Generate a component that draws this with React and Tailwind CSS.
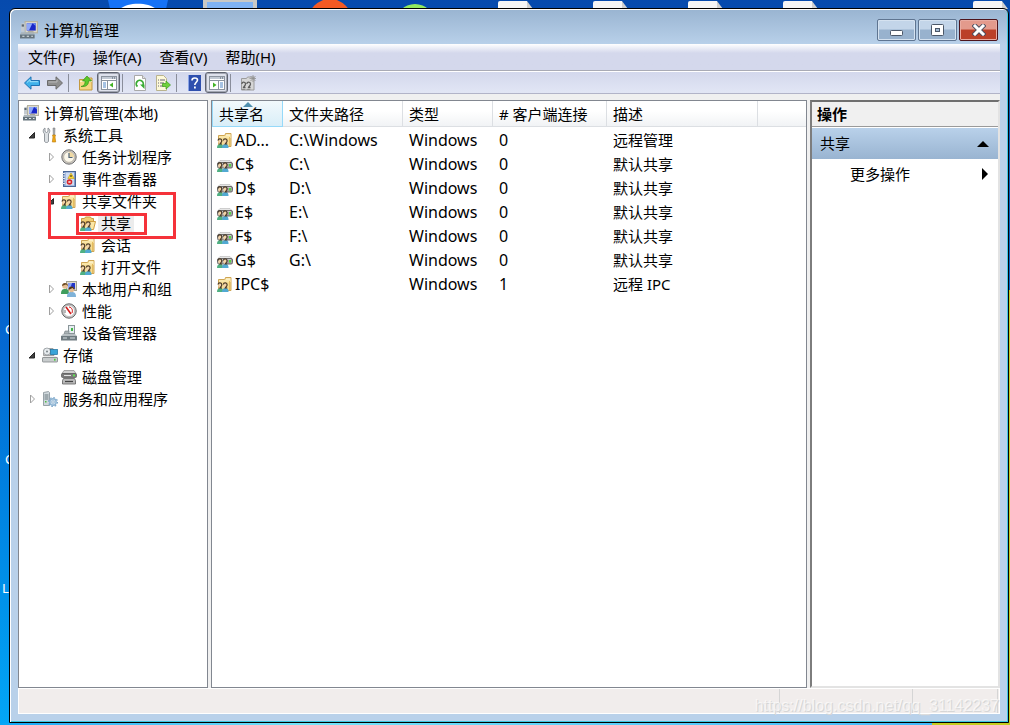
import { useState } from "react";

// Small Windows style icons, all drawn on a 16px grid
const Svg = ({ children, size = "size-4" }) => (
  <svg viewBox="0 0 16 16" className={`${size} shrink-0`} aria-hidden="true">
    {children}
  </svg>
);

const ComputerIcon = ({ size }) => (
  <Svg size={size}>
    <rect x="4.5" y="0.5" width="11" height="10" fill="#dedbcd" stroke="#b5b2a2" />
    <rect x="6" y="2" width="8" height="6.500" fill="#1a28c8" />
    <path d="M6 2h5l-3 6.500H6z" fill="#8fa8f8" />
    <path d="M11 2h3v2.500z" fill="#6f8df0" />
    <path d="M1 2.500l3-1v8H1z" fill="#c3cad0" />
    <path d="M1.500 3h2v2h-2z" fill="#5b6670" />
    <path d="M7 9h5v2H7z" fill="#a9a698" />
    <path d="M1 10h11l1 2H0z" fill="#aab4ba" />
    <rect x="0" y="12" width="13" height="3.5" fill="#66747d" />
    <path d="M2 13.5h2M6 13.5h2M10 13.5h1.5" stroke="#dfe6ea" />
  </Svg>
);

// two heads with green and blue shoulders, in the lower left corner
const People = () => (
  <>
    <path d="M0 16c0-3 1.400-4 3.500-4s2.500 1 2.500 4z" fill="#4fb083" />
    <path d="M5 16c0-3 1.400-4 3.500-4s3 1 3 4z" fill="#52a9d2" />
    <ellipse cx="3" cy="9.500" rx="1.800" ry="2.500" fill="#f1d3a9" />
    <ellipse cx="8" cy="9.500" rx="1.800" ry="2.500" fill="#f1d3a9" />
    <path d="M1 8.500c.3-2.200 3.800-2 3.800.2 0 1.600-1 2-1.800 3.300h2" fill="none" stroke="#4b3a28" strokeWidth="1.200" />
    <path d="M6.300 8.500c.3-2.200 3.800-2 3.800.2 0 1.600-1 2-1.800 3.300h2" fill="none" stroke="#4b3a28" strokeWidth="1.200" />
  </>
);

const SharedFolderIcon = () => (
  <Svg>
    <path d="M1.500 3.500h6l1-1.500V1.500h5.500v13h-12.500z" fill="#f5dc92" stroke="#cfa554" />
    <path d="M9 2.500h4.500v1.200H9z" fill="#fff8dc" />
    <path d="M2 5h12" stroke="#fff0bd" />
    <path d="M12.500 5v9" stroke="#e5bc5f" />
    <People />
  </Svg>
);

const OpenSharedFolderIcon = () => (
  <Svg>
    <path d="M1.500 3.500h3l1-1.500h5l1 1.500h2v9h-12z" fill="#f0cd74" stroke="#c99b45" />
    <path d="M6 6.500h9.500l-2 8H4z" fill="#fbe7a6" stroke="#cf9f42" />
    <People />
  </Svg>
);

const SharedDriveIcon = () => (
  <Svg>
    <path d="M3 4.500h10l2 2H1z" fill="#e6e6e6" stroke="#b5b5b5" strokeWidth="0.600" />
    <rect x="0.500" y="6.500" width="15" height="5.500" rx="1.500" fill="#a2a2a2" stroke="#6c6c6c" />
    <rect x="12" y="8" width="2" height="2.500" fill="#53d843" />
    <path d="M2 7.500h12" stroke="#d6d6d6" strokeWidth="0.700" />
    <People />
  </Svg>
);

const ToolsIcon = () => (
  <Svg>
    <path d="M3 1v3.500l1.500 1L6 4.500V1c2 1 2.500 4 .5 5.800V14c0 2-4 2-4 0V6.800C.5 5 1 2 3 1z" fill="#dde1e4" stroke="#7b8288" strokeWidth="0.800" />
    <path d="M11 1h2l-.3 7h-1.400z" fill="#a9adb2" stroke="#777" strokeWidth="0.500" />
    <path d="M10.500 8h3l-.5 2 .7 5h-3.400l.7-5z" fill="#f0a818" stroke="#b87908" strokeWidth="0.600" />
  </Svg>
);

const ClockIcon = () => (
  <Svg>
    <circle cx="8" cy="8" r="7.200" fill="#c9c5bf" stroke="#6e6e6e" />
    <circle cx="8" cy="8" r="5.300" fill="#fbf7ea" stroke="#a9a294" strokeWidth="0.600" />
    <path d="M8 3a5 5 0 0 1 5 5H8z" fill="#efd9a4" />
    <path d="M8 4v4.500h3.500" fill="none" stroke="#4d6378" strokeWidth="1.200" />
  </Svg>
);

const EventIcon = () => (
  <Svg>
    <rect x="2.500" y="0.500" width="12" height="15" fill="#7e9bcb" stroke="#4a6798" />
    <rect x="4.500" y="1.500" width="8.500" height="13" fill="#cfdcf1" />
    <path d="M1 2.500h3M1 5h3M1 7.500h3M1 10h3M1 12.500h3" stroke="#e6e9ee" />
    <path d="M10 2l3.300 5.500H6.800z" fill="#ffd933" stroke="#b99100" strokeWidth="0.500" />
    <path d="M10 4v2" stroke="#222" />
    <circle cx="8.500" cy="11" r="2.800" fill="#d8242a" />
    <path d="M7.500 10l2 2m0-2l-2 2" stroke="#fff" strokeWidth="0.900" />
  </Svg>
);

const UsersIcon = () => (
  <Svg>
    <rect x="5.500" y="0.500" width="10" height="9" fill="#dedbcf" stroke="#a3a193" />
    <rect x="7" y="2" width="7" height="6" fill="#2336c9" />
    <path d="M7 2h4L9 8H7z" fill="#8ea4f3" />
    <path d="M0 13c0-4 1.500-5 4-5s4 1 4 5z" fill="#3f9d5d" />
    <circle cx="4" cy="5" r="2.800" fill="#e5bd92" />
    <path d="M1 5c0-4 6-4 6 0L5 3.600z" fill="#6b4a22" />
    <path d="M6 16c0-4 1.500-5 4.500-5s4.500 1 4.500 5z" fill="#7fb2d8" />
    <circle cx="10.500" cy="8.500" r="2.800" fill="#e5bd92" />
    <path d="M7.500 9c-.2-4.600 6.200-4.600 6 0l-2-2z" fill="#4e3215" />
  </Svg>
);

const PerfIcon = () => (
  <Svg>
    <circle cx="8" cy="8" r="7.200" fill="#c9c9c9" stroke="#666" />
    <circle cx="8" cy="8" r="5.500" fill="#fff" stroke="#999" strokeWidth="0.500" />
    <path d="M5 4l5 7" stroke="#d31c1c" strokeWidth="1.600" />
    <path d="M8 4c3 .5 4 3 3 6" fill="none" stroke="#d31c1c" />
    <path d="M4 7v3" stroke="#777" />
  </Svg>
);

const DeviceIcon = () => (
  <Svg>
    <rect x="7.500" y="0.500" width="6" height="8" fill="#e6eef0" stroke="#8a9599" />
    <rect x="10" y="3" width="2" height="3" fill="#43b649" />
    <path d="M4 6h4v3H3z" fill="#aab2b5" stroke="#747d81" strokeWidth="0.600" />
    <path d="M2 9h12l2 2H0z" fill="#b7bfc2" />
    <rect x="0" y="11" width="16" height="4.500" fill="#6f7b80" />
    <path d="M2 13h4M9 13h5" stroke="#d6dee0" />
  </Svg>
);

const StorageIcon = () => (
  <Svg>
    <path d="M1.500 3.500L3 1.500h8l1 2v5H1.500z" fill="#c9c9c9" stroke="#888" strokeWidth="0.700" />
    <circle cx="5" cy="4.500" r="3.500" fill="#e7ebee" stroke="#8d9296" strokeWidth="0.700" />
    <circle cx="5" cy="4.500" r="1" fill="#7a8288" />
    <rect x="8.500" y="2.500" width="7" height="5" fill="#3aa4d8" stroke="#1c6f9d" strokeWidth="0.700" />
    <path d="M2 9h12l1.500 2H.5z" fill="#ececec" />
    <rect x="0.500" y="10.500" width="15" height="4.500" rx="0.500" fill="#c8cccd" stroke="#808588" strokeWidth="0.800" />
    <rect x="12" y="11.800" width="1.600" height="1.800" fill="#44cf3b" />
  </Svg>
);

const DiskIcon = () => (
  <Svg>
    <path d="M3 1.500h10l2 3H1z" fill="#d0d0d0" stroke="#888" strokeWidth="0.700" />
    <rect x="0.500" y="4.500" width="15" height="4" rx="1" fill="#7b7b7b" stroke="#555" strokeWidth="0.700" />
    <path d="M3 6.500h7" stroke="#e4e4e4" />
    <rect x="12" y="5.500" width="2" height="1.800" fill="#5ae84a" />
    <path d="M2.500 9.500h11l1 2v3.500h-13v-3.500z" fill="#b9b9b9" stroke="#5f5f5f" strokeWidth="0.800" />
    <path d="M4 12.500h8" stroke="#444" strokeWidth="1.200" />
  </Svg>
);

const ServicesIcon = () => (
  <Svg>
    <path d="M1.500 1.500l5-1 1 1v13h-6z" fill="#d0d8dc" stroke="#848f95" strokeWidth="0.800" />
    <path d="M2.500 4h4M2.500 6h4M2.500 8h4" stroke="#6d7a80" />
    <rect x="3" y="10" width="1.500" height="1.500" fill="#4dbb46" />
    <circle cx="11" cy="11" r="3.200" fill="#c7dcec" stroke="#8db3d2" strokeWidth="1.400" />
    <circle cx="11" cy="11" r="4.500" fill="none" stroke="#7ba6c9" strokeWidth="1.200" strokeDasharray="1.600 1.900" />
    <circle cx="11" cy="11" r="1.200" fill="#fff" stroke="#6d9abf" strokeWidth="0.600" />
  </Svg>
);

// Toolbar icons
const ArrowIcon = ({ back }) => (
  <Svg>
    {back ? (
      <path d="M0.500 8L7 1.800v3.700h8.500v5H7v3.700z" fill="#3fb1ea" stroke="#1e72b4" />
    ) : (
      <path d="M15.500 8L9 1.800v3.700H.5v5H9v3.700z" fill="#8f8f8f" stroke="#6b6b6b" />
    )}
    <path d={back ? "M3 7.500l3-2.800v2h8" : "M1.500 7h8.500V4.500"} fill="none" stroke={back ? "#9fe2fb" : "#b9b9b9"} />
  </Svg>
);

const UpFolderIcon = () => (
  <Svg>
    <path d="M1.500 4.500h5l1-1.500h6.500v12h-12.500z" fill="#f5d682" stroke="#c4993f" />
    <path d="M2 6.500h12" stroke="#fff1c2" />
    <path d="M3 11.500c3-.5 4.500-2.500 4-5.500H4.500L9 1l4.500 5h-3c.2 4-2.500 6-7.500 5.500z" fill="#5cc82c" stroke="#3a9217" strokeWidth="0.700" />
  </Svg>
);

const PaneIcon = ({ right }) => (
  <Svg>
    <rect x="0.500" y="1.500" width="15" height="13" fill="#fff" stroke="#8b939e" />
    <path d="M1 3h14" stroke="#c3cad4" strokeWidth="2" />
    <path d="M1 5.500h14" stroke="#8b939e" />
    <path d="M11 3h1M13 3h1" stroke="#4e5a6b" />
    {right ? (
      <>
        <path d="M9.500 6v8" stroke="#8b939e" />
        <path d="M11 8h3M11 10h3M11 12h3" stroke="#4f86c6" />
        <path d="M4 7.500l3.500 2.500L4 12.500z" fill="#42b324" />
      </>
    ) : (
      <>
        <path d="M6.500 6v8" stroke="#8b939e" />
        <path d="M2 8h3M2 10h3M2 12h3" stroke="#4f86c6" />
        <path d="M12 7.500L8.500 10l3.500 2.500z" fill="#42b324" />
      </>
    )}
  </Svg>
);

const RefreshIcon = () => (
  <Svg>
    <path d="M2.500.5h8l3 3v12h-11z" fill="#fff" stroke="#a9a9a9" />
    <path d="M10.500.5v3h3" fill="#e5e5e5" stroke="#a9a9a9" />
    <path d="M5.500 11.500A3.500 3.500 0 1 1 10.500 11" fill="none" stroke="#3aab35" strokeWidth="1.800" />
    <path d="M8 9.500h4.500V14z" fill="#3aab35" />
  </Svg>
);

const ExportIcon = () => (
  <Svg>
    <path d="M1.500.5h7l3 3v12h-10z" fill="#fdf9d9" stroke="#b9b38e" />
    <path d="M3 5h1M5 5h5M3 8h1M5 8h4M3 11h1M5 11h4" stroke="#66647a" />
    <path d="M7.500 8.500h3.500V6l4.500 4-4.500 4v-2.500H7.500z" fill="#6fd13a" stroke="#3f9b1d" strokeWidth="0.700" />
  </Svg>
);

const HelpIcon = () => (
  <Svg>
    <rect x="2" y="0" width="13" height="16" fill="#2f50ae" />
    <path d="M2.500 0v16" stroke="#8ba4e6" />
    <path d="M6 5.500c0-3.500 5.500-3 5.500-.5 0 2-2.700 2.500-2.700 5" fill="none" stroke="#fff" strokeWidth="1.600" />
    <rect x="8" y="11.500" width="1.800" height="2" fill="#fff" />
  </Svg>
);

const NewShareIcon = () => (
  <Svg>
    <path d="M1.500 3.500h5l1-1.500H14v13H1.500z" fill="#d6d6d6" stroke="#9c9c9c" />
    <path d="M13 0v7M9.500 3.500h6.500M10.500 1l5 5M15.500 1l-5 5" stroke="#909090" strokeWidth="0.800" />
    <path d="M1.800 9c.3-2.500 3.700-2.300 3.700 0 0 1.600-1.500 2-2 3.500h2M6.800 9c.3-2.500 3.700-2.300 3.700 0 0 1.600-1.500 2-2 3.500h2" fill="none" stroke="#5b5b5b" strokeWidth="1.300" />
    <path d="M1 15c1-1.500 4-1.500 5 0zM6 15c1-1.500 4-1.500 5 0z" fill="#8c8c8c" />
  </Svg>
);

const toolbar = [
  [
    { name: "后退", icon: <ArrowIcon back /> },
    { name: "前进", icon: <ArrowIcon /> },
  ],
  [
    { name: "向上", icon: <UpFolderIcon /> },
    { name: "显示/隐藏控制台树", icon: <PaneIcon />, pressed: true },
  ],
  [
    { name: "刷新", icon: <RefreshIcon /> },
    { name: "导出列表", icon: <ExportIcon /> },
  ],
  [
    { name: "帮助", icon: <HelpIcon /> },
    { name: "显示/隐藏操作窗格", icon: <PaneIcon right />, pressed: true },
  ],
  [{ name: "新建共享", icon: <NewShareIcon /> }],
];

const tree = [
  { label: "系统工具", level: 1, state: "open", icon: <ToolsIcon /> },
  { label: "任务计划程序", level: 2, state: "closed", icon: <ClockIcon /> },
  { label: "事件查看器", level: 2, state: "closed", icon: <EventIcon /> },
  { label: "共享文件夹", level: 2, state: "open", icon: <SharedFolderIcon /> },
  { label: "共享", level: 3, icon: <OpenSharedFolderIcon /> },
  { label: "会话", level: 3, icon: <SharedFolderIcon /> },
  { label: "打开文件", level: 3, icon: <SharedFolderIcon /> },
  { label: "本地用户和组", level: 2, state: "closed", icon: <UsersIcon /> },
  { label: "性能", level: 2, state: "closed", icon: <PerfIcon /> },
  { label: "设备管理器", level: 2, icon: <DeviceIcon /> },
  { label: "存储", level: 1, state: "open", icon: <StorageIcon /> },
  { label: "磁盘管理", level: 2, icon: <DiskIcon /> },
  { label: "服务和应用程序", level: 1, state: "closed", icon: <ServicesIcon /> },
];

const indent = { 1: "pl-[7px]", 2: "pl-[26px]", 3: "pl-[45px]" };

const shares = [
  { name: "AD...", path: "C:\\Windows", clients: 0, desc: "远程管理", folder: true },
  { name: "C$", path: "C:\\", clients: 0, desc: "默认共享" },
  { name: "D$", path: "D:\\", clients: 0, desc: "默认共享" },
  { name: "E$", path: "E:\\", clients: 0, desc: "默认共享" },
  { name: "F$", path: "F:\\", clients: 0, desc: "默认共享" },
  { name: "G$", path: "G:\\", clients: 0, desc: "默认共享" },
  { name: "IPC$", path: "", clients: 1, desc: "远程 IPC", folder: true },
];

const Desktop = () => (
  <>
    <svg className="absolute left-0 top-0 h-[9px] w-[1010px]" viewBox="0 0 1010 9" aria-hidden="true">
      <path d="M108 0h60l-2 9h-56z" fill="#1673f6" />
      <path d="M120 9c8-7 28-7 36 0z" fill="#fff" />
      <path d="M203 0h54v9h-54z" fill="#c9c9c5" />
      <path d="M207 2h46v7h-46z" fill="#7fb3f3" />
      <circle cx="330" cy="21" r="22" fill="#f35a24" />
      <circle cx="415" cy="24" r="20" fill="#93ea5f" />
      {[498, 593, 688, 783, 973].map((x) => (
        <g key={x}>
          <path d={`M${x} 9V3q0-2 2-2h27v8z`} fill="#f5f5f5" />
          <path d={`M${x + 29} 1l6 8h-6z`} fill="#cfcfcf" />
        </g>
      ))}
    </svg>
    <div className="absolute inset-x-0 bottom-0 h-[2px] bg-linear-to-r from-[#05a6f6] via-[#74e4f8] via-30% to-[#3bb4fa]" />
    <div className="absolute bottom-0 right-0 h-[2px] w-[78px] bg-[#c5cc1e]" />
    <div className="absolute right-0 top-[290px] bottom-0 w-px bg-[#c5cc1e]" />
    <span className="absolute left-[5px] top-[320px] text-[13px] leading-[18px] text-white">C</span>
    <span className="absolute left-[5px] top-[450px] text-[13px] leading-[18px] text-white">C</span>
    <span className="absolute left-[2px] top-[579px] text-[13px] leading-[18px] text-white">L</span>
  </>
);

const captionButton =
  "flex h-[22px] w-[39px] items-center justify-center rounded-[2px] border border-[#5f7591] bg-linear-to-b from-[#c3d5e9] from-45% to-[#98b2ce] to-50% shadow-[inset_0_0_0_1px_#d5e2f0]";

const TitleBar = () => (
  <header className="flex h-[35px] shrink-0 items-start px-[2px]">
    <div className="flex flex-1 items-center gap-[6px] pt-[10px]">
      <ComputerIcon size="size-[18px]" />
      <h1 className="text-[15px] leading-[22px]">计算机管理</h1>
    </div>
    <div className="flex gap-[2px] pt-[10px]">
      <button className={captionButton} aria-label="最小化">
        <svg viewBox="0 0 14 14" className="size-[14px]">
          <rect x="0.500" y="7.500" width="12" height="5" rx="1" fill="#fff" stroke="#4b5768" />
        </svg>
      </button>
      <button className={captionButton} aria-label="最大化">
        <svg viewBox="0 0 14 14" className="size-[14px]">
          <rect x="0.500" y="1.500" width="12" height="11" rx="1" fill="#fff" stroke="#4b5768" />
          <rect x="4.500" y="5.500" width="4" height="3" fill="#a3bad3" stroke="#4b5768" />
        </svg>
      </button>
      <button
        aria-label="关闭"
        className="flex h-[22px] w-[39px] items-center justify-center rounded-[2px] border border-[#4d141b] bg-linear-to-b from-[#e39a8c] from-45% to-[#bb4028] to-50% shadow-[inset_0_0_0_1px_#e9aca2]"
      >
        <svg viewBox="0 0 14 12" className="h-3 w-[14px]">
          <path d="M3 2l8 8m0-8l-8 8" stroke="#4b4e5e" strokeWidth="4.800" strokeLinecap="square" />
          <path d="M3 2l8 8m0-8l-8 8" stroke="#fff" strokeWidth="3" strokeLinecap="square" />
        </svg>
      </button>
    </div>
  </header>
);

const Toolbar = () => (
  <div className="flex h-[23px] shrink-0 items-center border-b border-[#b2b4c8] border-t border-t-white bg-linear-to-b from-[#d3d8ec] to-[#e2e6f5] pl-[2px]">
    {toolbar.map((group, i) => (
      <div key={i} className="flex items-center">
        {i > 0 && <span className="ml-[2px] mr-[5px] h-[18px] w-px bg-[#8a8e9b]" />}
        {group.map((item) => (
          <button
            key={item.name}
            aria-label={item.name}
            className={`flex h-[21px] w-[23px] items-center justify-center ${
              item.pressed ? "rounded-[3px] border border-[#5f6470] bg-[#dfe2ec] shadow-[inset_0_0_0_1px_#a3a7b3]" : ""
            }`}
          >
            {item.icon}
          </button>
        ))}
      </div>
    ))}
  </div>
);

const Expander = ({ state }) => (
  <svg viewBox="0 0 12 10" className="h-[10px] w-3 shrink-0" aria-hidden="true">
    {state === "open" && <path d="M8.500 2.500v5.500H3z" fill="#404040" stroke="#262626" />}
    {state === "closed" && <path d="M4.500 1l4 4-4 4z" fill="#fff" stroke="#a0a0a0" />}
  </svg>
);

const Sidebar = () => {
  const [selected, setSelected] = useState("共享");

  return (
    <nav className="relative w-[190px] shrink-0 border border-[#828790] bg-white pt-px">
      <div className="flex h-[22px] items-center gap-1 pl-1 text-[15px]">
        <ComputerIcon />
        <span className="pl-px">计算机管理(本地)</span>
      </div>
      <ul>
        {tree.map((node) => (
          <li key={node.label} className={indent[node.level]}>
            <button onClick={() => setSelected(node.label)} className="flex h-[22px] items-center gap-[4px] text-[15px]">
              <Expander state={node.state} />
              {node.icon}
              <span
                className={`-ml-[2px] whitespace-nowrap px-[3px] leading-[20px] ${
                  selected === node.label ? "rounded-[2px] bg-[#ececec]" : ""
                }`}
              >
                {node.label}
              </span>
            </button>
          </li>
        ))}
      </ul>

      {/* highlight boxes */}
      <div className="pointer-events-none absolute left-[29px] top-[91px] h-[47px] w-[128px] border-3 border-[#f5323a]" />
      <div className="pointer-events-none absolute left-[57px] top-[112px] h-[22px] w-[71px] border-3 border-[#f5323a]" />
    </nav>
  );
};

const th =
  "border-r border-b border-[#dcdfe3] bg-linear-to-b from-white from-40% to-[#f1f3f5] p-0 pt-[2px] pl-[6px] text-left font-normal";

const ShareList = () => (
  <main className="min-w-0 flex-1 border border-[#828790] bg-white">
    <table className="w-full table-fixed border-separate border-spacing-0 text-base">
      <colgroup>
        <col className="w-[71px]" />
        <col className="w-[120px]" />
        <col className="w-[90px]" />
        <col className="w-[114px]" />
        <col className="w-[151px]" />
        <col />
      </colgroup>
      <thead className="text-[15px]">
        <tr className="h-[26px]">
          <th className="relative border-x border-b border-[#96d9f9] bg-linear-to-b from-[#f2f9fc] to-[#d9eef8] p-0 pt-[2px] pl-[6px] text-left font-normal">
            <svg viewBox="0 0 10 5" className="absolute left-[30px] top-px h-[5px] w-[10px]" aria-hidden="true">
              <path d="M5 0l5 5H0z" fill="#4f8fae" />
            </svg>
            共享名
          </th>
          <th className={th}>文件夹路径</th>
          <th className={th}>类型</th>
          <th className={th}># 客户端连接</th>
          <th className={th}>描述</th>
          <th className="border-b border-[#dcdfe3] bg-linear-to-b from-white from-40% to-[#f1f3f5]" />
        </tr>
      </thead>
      <tbody>
        <tr className="h-px">
          <td colSpan={6} className="p-0" />
        </tr>
        {shares.map((s) => (
          <tr key={s.name} className="h-6">
            <td className="p-0 pl-[5px]">
              <span className="flex items-center gap-[2px]">
                {s.folder ? <SharedFolderIcon /> : <SharedDriveIcon />}
                {s.name}
              </span>
            </td>
            <td className="p-0 pl-[6px]">{s.path}</td>
            <td className="p-0 pl-[6px]">Windows</td>
            <td className="p-0 pl-[6px]">{s.clients}</td>
            <td className="p-0 pl-[6px] text-[15px]">{s.desc}</td>
            <td className="p-0" />
          </tr>
        ))}
      </tbody>
    </table>
  </main>
);

const Actions = () => (
  <aside className="w-[190px] shrink-0 border-2 border-[#e3e3e3] border-l-[#7d7d7d] border-t-[#6f6f6f] bg-white text-[15px]">
    <h2 className="flex h-[25px] items-center border-b border-[#9a9a9a] bg-[#f0f0f0] pl-[5px] font-bold">操作</h2>
    <button className="mt-px flex h-[31px] w-full items-center justify-between bg-linear-to-b from-[#b9d1ea] to-[#99b4d1] pl-2 pr-[9px]">
      共享
      <svg viewBox="0 0 12 6" className="h-[6px] w-3" aria-hidden="true">
        <path d="M6 0l6 6H0z" />
      </svg>
    </button>
    <button className="flex h-[30px] w-full items-center justify-between pl-[38px] pr-[10px]">
      更多操作
      <svg viewBox="0 0 6 12" className="h-3 w-[6px]" aria-hidden="true">
        <path d="M0 0l6 6-6 6z" />
      </svg>
    </button>
  </aside>
);

const App = () => {
  return (
    <div className="relative flex h-screen w-full overflow-hidden bg-linear-to-b from-[#064aad] via-[#0566d0] via-45% to-[#04a6f6] pt-2 pr-px pb-[2px] pl-[9px] font-['Noto_Sans','Noto_Sans_CJK_SC',sans-serif] text-black">
      <Desktop />

      <div className="relative flex min-w-0 flex-1 flex-col rounded-t-[6px] border border-black bg-[#b9d1ea] bg-linear-to-b from-[#99b4d1] to-[#b9d1ea] to-[36px] px-2 pb-2 shadow-[inset_1px_1px_0_#fff,inset_-1px_-1px_0_#3fc8e0]">
        <TitleBar />

        <nav className="flex h-[27px] shrink-0 items-center gap-[18px] border-b border-[#a9abb5] bg-linear-to-b from-white to-[#d4d8ec] to-[9px] pl-[10px] text-[15px]">
          <button>文件(F)</button>
          <button>操作(A)</button>
          <button>查看(V)</button>
          <button>帮助(H)</button>
        </nav>
        <Toolbar />

        <div className="flex min-h-0 flex-1 gap-[3px] bg-[#f0f0f0] pt-[6px]">
          <Sidebar />
          <ShareList />
          <Actions />
        </div>

        <footer className="relative flex h-[26px] shrink-0 justify-end border border-white bg-[#f1edec] pr-px">
          <span className="h-full w-[133px] border-l border-[#d5d5d5]" />
          <span className="h-full w-[86px] border-x border-[#d5d5d5]" />
          <span className="absolute right-0 top-[8px] font-['Liberation_Sans',sans-serif] text-[16px] leading-[18px] text-white/60 [text-shadow:1px_1px_0_#d6d6d6]">
            https://blog.csdn.net/qq_31142237
          </span>
        </footer>
      </div>
    </div>
  );
};

export default App;
